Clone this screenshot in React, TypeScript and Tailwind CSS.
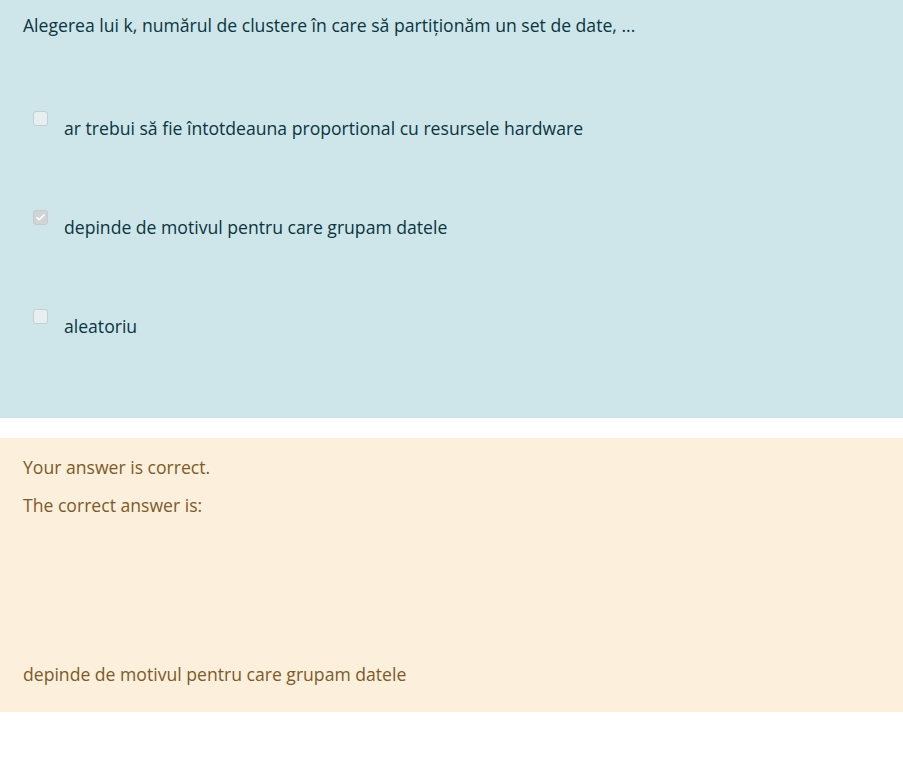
import { Check } from "lucide-react";

const options = [
	{ label: "ar trebui să fie întotdeauna proportional cu resursele hardware", checked: false },
	{ label: "depinde de motivul pentru care grupam datele", checked: true },
	{ label: "aleatoriu", checked: false },
];

function Box({ checked }: { checked: boolean }) {
	return (
		<span
			className={`flex h-[15px] w-[15px] flex-shrink-0 items-center justify-center rounded-[3px] border ${
				checked ? "border-[#c6cbcc] bg-[#d0d4d5]" : "border-[#c4cfd1] bg-[#e7eff0]"
			}`}
		>
			{checked && <Check className="h-[11px] w-[11px] text-white" strokeWidth={3.5} />}
		</span>
	);
}

export default function App() {
	return (
		<div className="min-h-[782px] bg-white font-['Open_Sans',sans-serif] text-[17.6px]">
			<div className="h-[418px] bg-[#cee6ea] px-[23px] pt-[12px] text-[#0a3540]">
				<p className="leading-[26px]">
					Alegerea lui k, numărul de clustere în care să partiționăm un set de date, ...
				</p>
				<div className="mt-[73px] flex flex-col gap-[69px] pl-[10px]">
					{options.map((o) => (
						<div key={o.label} className="flex items-start gap-[16px]">
							<Box checked={o.checked} />
							<span className="mt-[4px] leading-[26px]">{o.label}</span>
						</div>
					))}
				</div>
			</div>
			<div className="mt-[20px] h-[274px] bg-[#fcefdc] px-[23px] pt-[16px] text-[#7d5a29]">
				<p className="leading-[26px]">Your answer is correct.</p>
				<p className="mt-[12px] leading-[26px]">The correct answer is:</p>
				<p className="mt-[143px] leading-[26px]">depinde de motivul pentru care grupam datele</p>
			</div>
		</div>
	);
}
